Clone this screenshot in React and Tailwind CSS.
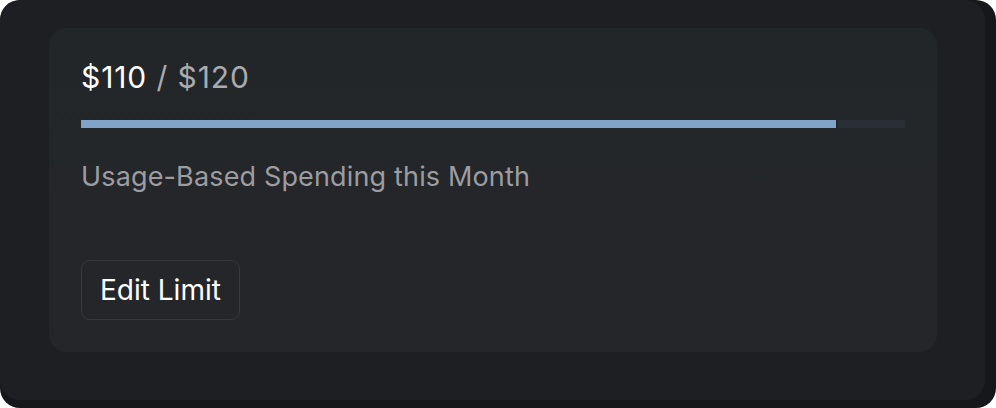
import React from "react";

export default function App() {
  const used = 110;
  const limit = 120;
  const pct = (used / limit) * 100;

  return (
    <div className="w-[996px] h-[408px] bg-white" style={{ fontFamily: "Inter, 'Noto Sans', sans-serif" }}>
      <div className="w-full h-full rounded-[20px] bg-[#16171a] overflow-hidden">
        <div className="w-[985px] h-[400px] rounded-[20px] bg-[#1e1f22] pt-[28px] pl-[49px]">
          <div className="w-[888px] h-[324px] rounded-[18px] bg-gradient-to-b from-[#232629] to-[#252629] px-[32px] pt-[28px]">
            <div className="text-[30px] leading-[42px] tracking-[0.9px]">
              <span className="text-white">${used}</span>
              <span className="text-[#a9abae]"> / ${limit}</span>
            </div>

            <div className="mt-[22px] h-[8px] w-[824px] flex gap-[2px]">
              <div className="h-full bg-[#80a4c8]" style={{ width: `${pct}%` }} />
              <div className="h-full flex-1 bg-[#2a2f36]" />
            </div>

            <div className="mt-[31px] text-[27px] leading-[36px] tracking-[0.15px] text-[#9b9da1]">
              Usage-Based Spending this Month
            </div>

            <button className="mt-[65px] h-[60px] px-[18px] rounded-[9px] border border-[#38393c] text-white text-[28px] leading-none">
              Edit Limit
            </button>
          </div>
        </div>
      </div>
    </div>
  );
}
